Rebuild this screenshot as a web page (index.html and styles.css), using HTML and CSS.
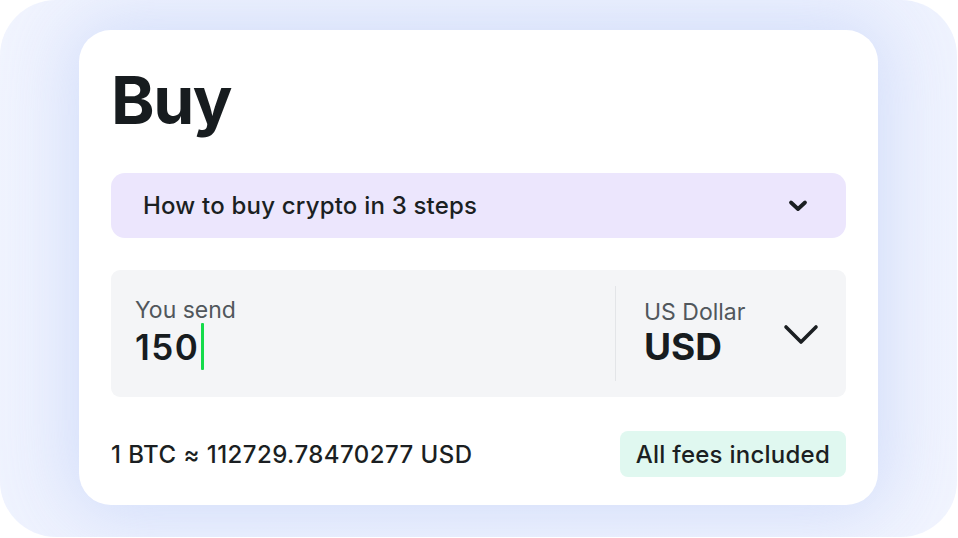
FILE: index.html
```html
<!DOCTYPE html>
<html lang="en">
<head>
<meta charset="utf-8">
<title>Buy</title>
<link rel="stylesheet" href="styles.css">
</head>
<body>
<div class="frame">
  <div class="card">
    <h1 class="title">Buy</h1>
    <div class="accordion">
      <span class="accordion-text">How to buy crypto in 3 steps</span>
      <svg class="acc-chevron" width="20" height="14" viewBox="0 0 20 14"><path d="M3 3.5 L10 10 L17 3.5" fill="none" stroke="#1b1f22" stroke-width="3.8" stroke-linecap="round" stroke-linejoin="round"/></svg>
    </div>
    <div class="input-box">
      <div class="send">
        <div class="label">You send</div>
        <div class="amount"><span class="digits">150</span><span class="cursor"></span></div>
      </div>
      <div class="divider"></div>
      <div class="currency">
        <div class="currency-info">
          <div class="label">US Dollar</div>
          <div class="code">USD</div>
        </div>
        <svg class="cur-chevron" width="36" height="22" viewBox="0 0 36 22"><path d="M3 3 L18 18 L33 3" fill="none" stroke="#1b1f22" stroke-width="3.6" stroke-linecap="round" stroke-linejoin="round"/></svg>
      </div>
    </div>
    <div class="bottom">
      <div class="rate">1 BTC ≈ 112729.78470277 USD</div>
      <div class="badge">All fees included</div>
    </div>
  </div>
</div>
</body>
</html>
```
FILE: styles.css
```css
* { box-sizing: border-box; }
html, body { margin: 0; padding: 0; background: #ffffff; }
body { font-family: Inter, "Noto Sans", sans-serif; color: #1b1f22; }
.frame {
  width: 957px;
  height: 537px;
  border-radius: 56px;
  background: linear-gradient(135deg, #f1f4fe 0%, #eef2fe 50%, #f1f4fe 100%);
  padding: 30px 79px 32px 79px;
  overflow: hidden;
}
.card {
  background: #ffffff;
  border-radius: 32px;
  height: 475px;
  padding: 30px 32px 0 32px;
  box-shadow: 0 0 70px 10px rgba(200, 214, 250, 0.75);
}
.title {
  margin: 0;
  font-size: 66px;
  line-height: 80px;
  font-weight: 700;
  letter-spacing: -1.5px;
  color: #171c1f;
}
.accordion {
  margin-top: 33px;
  height: 65px;
  background: #ece6fd;
  border-radius: 14px;
  display: flex;
  align-items: center;
  justify-content: space-between;
  padding: 0 38px 0 32px;
}
.accordion-text {
  font-size: 24px;
  font-weight: 500;
  letter-spacing: 0.2px;
  color: #1b1f22;
}
.acc-chevron { display: block; }
.input-box {
  margin-top: 32px;
  height: 127px;
  background: #f4f5f7;
  border-radius: 9px;
  display: flex;
  padding: 16px 0;
}
.send {
  width: 504px;
  padding: 11px 0 0 24px;
}
.label {
  font-size: 23px;
  line-height: 26px;
  color: #51575c;
}
.amount {
  display: flex;
  align-items: center;
  font-size: 35px;
  line-height: 44px;
  font-weight: 600;
  color: #171c1f;
}
.digits { letter-spacing: 1.5px; }
.cursor {
  display: inline-block;
  width: 3px;
  height: 47px;
  background: #14db4a;
  margin-left: 2px;
  border-radius: 1px;
}
.divider {
  width: 1px;
  background: #e3e5e8;
}
.currency {
  flex: 1;
  display: flex;
  align-items: center;
  justify-content: space-between;
  padding: 0 27px 0 28px;
}
.code {
  font-size: 37px;
  line-height: 44px;
  font-weight: 700;
  color: #171c1f;
}
.cur-chevron { display: block; margin-top: 3px; }
.bottom {
  margin-top: 34px;
  display: flex;
  align-items: center;
  justify-content: space-between;
}
.rate {
  font-size: 24px;
  font-weight: 500;
  letter-spacing: 0.45px;
  color: #1b1f22;
}
.badge {
  height: 46px;
  display: flex;
  align-items: center;
  padding: 0 16px;
  background: #e0f8f0;
  border-radius: 8px;
  font-size: 24px;
  font-weight: 500;
  letter-spacing: 0.25px;
  color: #1b1f22;
}
```
